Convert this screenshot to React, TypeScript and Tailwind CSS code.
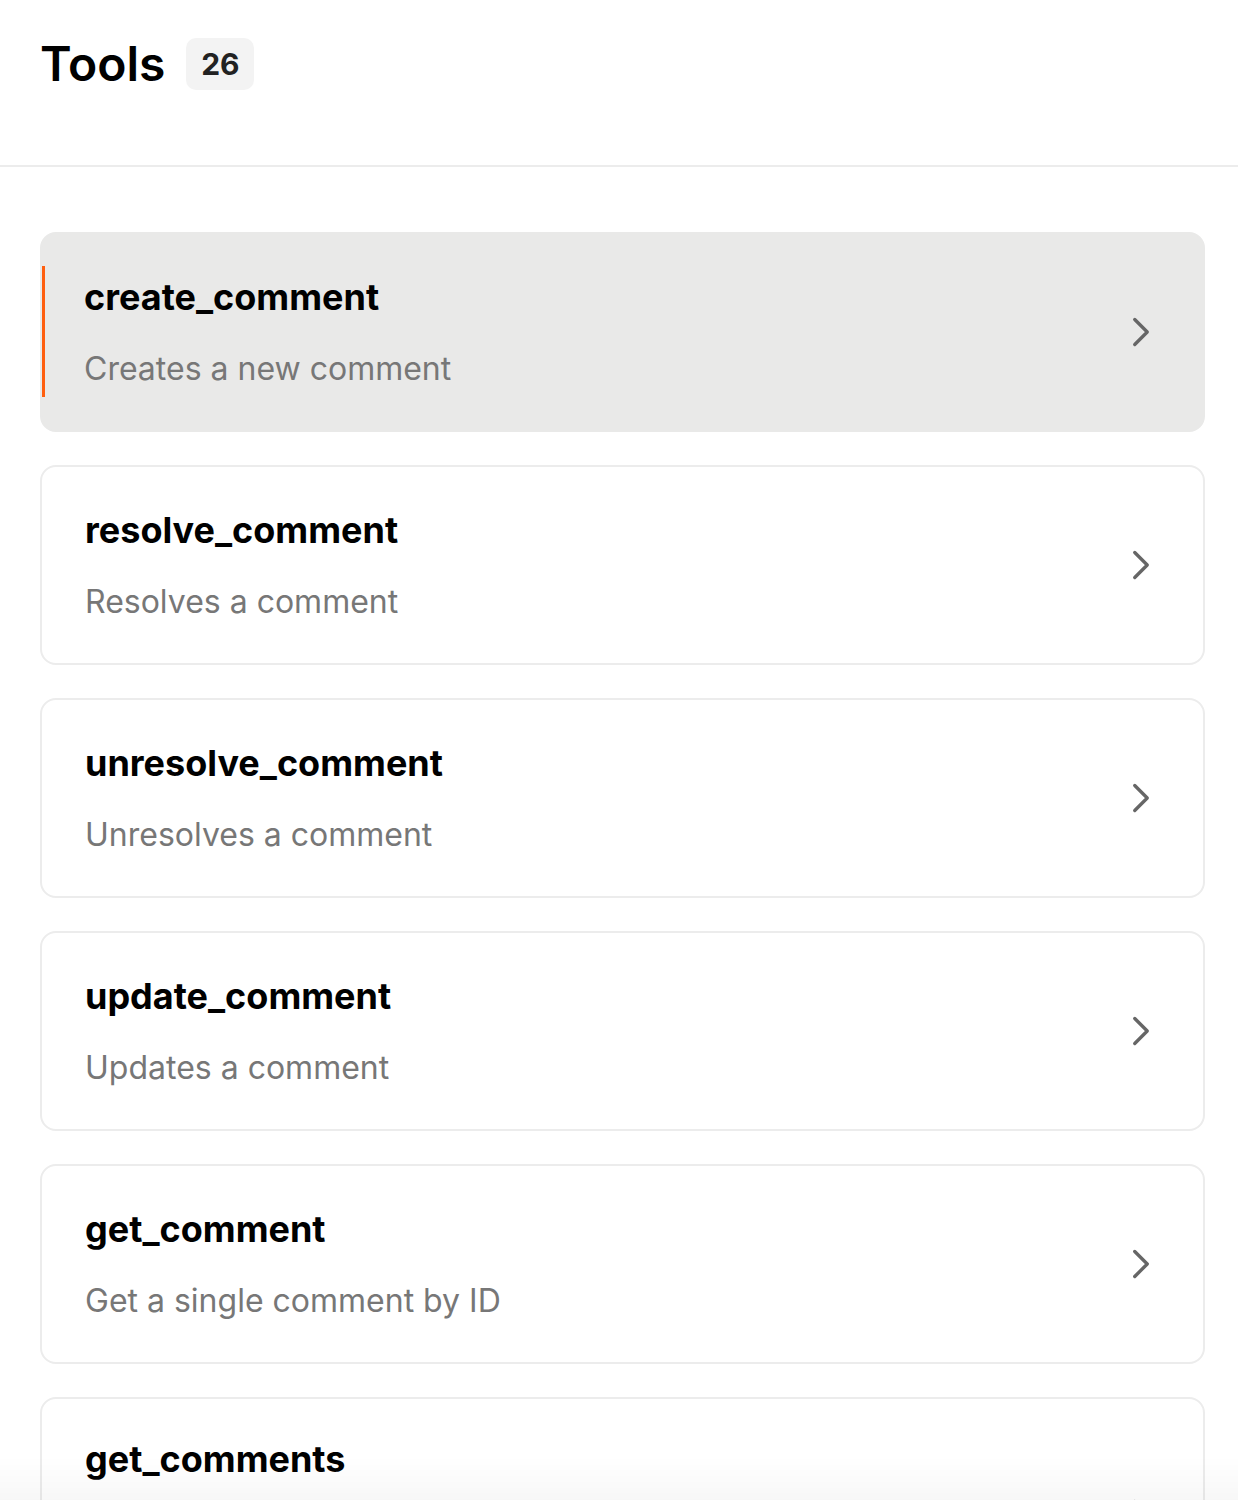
import { useState } from "react"

const tools = [
  { name: "create_comment", description: "Creates a new comment" },
  { name: "resolve_comment", description: "Resolves a comment" },
  { name: "unresolve_comment", description: "Unresolves a comment" },
  { name: "update_comment", description: "Updates a comment" },
  { name: "get_comment", description: "Get a single comment by ID" },
  {
    name: "get_comments",
    description: "Get all comments on a file, including replies, reactions and resolved threads, with optional filters",
  },
]

function Chevron() {
  return (
    <svg width="50" height="50" viewBox="0 0 24 24" fill="none" stroke="#666666" strokeWidth="1.6" strokeLinecap="round" strokeLinejoin="round" className="shrink-0">
      <path d="m9 18 6-6-6-6" />
    </svg>
  )
}

function ToolCard({
  tool,
  active,
  onSelect,
}: {
  tool: { name: string; description: string }
  active: boolean
  onSelect: () => void
}) {
  return (
    <button
      onClick={onSelect}
      className={
        active
          ? "relative flex min-h-[200px] w-full shrink-0 items-center rounded-2xl border-2 border-[#e9e9e8] bg-[#e9e9e8] py-[38px] pl-[42px] pr-[37px] text-left"
          : "relative flex min-h-[200px] w-full shrink-0 items-center rounded-2xl border-2 border-[#ececec] bg-white py-[38px] pl-[43px] pr-[37px] text-left"
      }
    >
      {active && <span className="absolute left-0 top-[32px] h-[131px] w-[3px] bg-[#ff5f0f]" />}
      <div className="flex flex-1 flex-col">
        <span className="text-[36px] font-bold leading-[44px] text-black">{tool.name}</span>
        <span className="mt-[30px] text-[32px] leading-[40px] text-[#777777]">{tool.description}</span>
      </div>
      <Chevron />
    </button>
  )
}

export default function App() {
  const [selected, setSelected] = useState(0)

  return (
    <div className="min-h-screen bg-white" style={{ fontFamily: "Inter, 'Noto Sans', sans-serif" }}>
      <header className="flex h-[167px] items-start border-b-2 border-[#ececec] px-10 pt-[38px]">
        <div className="flex items-center gap-[21px]">
          <h1 className="text-[48px] font-semibold leading-[52px] text-black">Tools</h1>
          <span className="flex h-[52px] w-[68px] items-center justify-center rounded-[10px] bg-[#f3f3f3] text-[30px] font-bold text-[#222222]">
            26
          </span>
        </div>
      </header>

      <div className="flex flex-col gap-[33px] pb-10 pl-10 pr-[33px] pt-[65px]">
        {tools.map((tool, i) => (
          <ToolCard key={tool.name} tool={tool} active={i === selected} onSelect={() => setSelected(i)} />
        ))}
      </div>

      <div className="pointer-events-none fixed inset-x-0 bottom-0 h-[44px] bg-gradient-to-b from-transparent to-black/[0.03]" />
    </div>
  )
}
